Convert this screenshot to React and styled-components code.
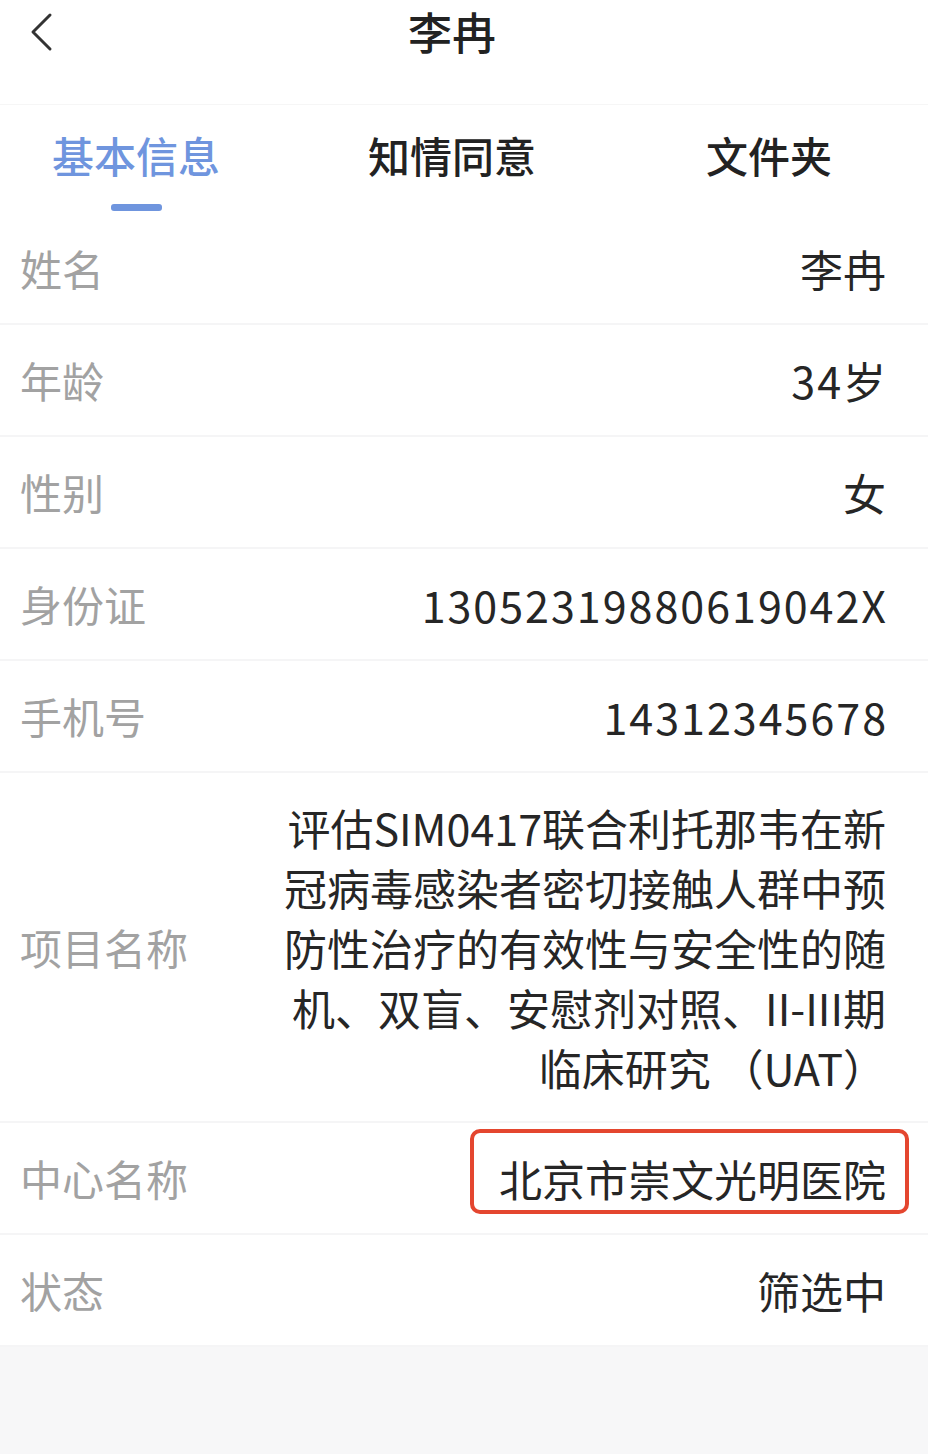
import React, { useState } from "react";
import styled, { createGlobalStyle } from "styled-components";

const GlobalStyle = createGlobalStyle`
  html, body {
    margin: 0;
    padding: 0;
    background: #f7f7f8;
    font-family: "Noto Sans CJK SC", "Noto Sans", sans-serif;
  }
  * { box-sizing: border-box; }
`;

const tabs = ["基本信息", "知情同意", "文件夹"];

const rows = [
  { label: "姓名", value: "李冉" },
  { label: "年龄", value: "34岁", numeric: true },
  { label: "性别", value: "女" },
  { label: "身份证", value: "13052319880619042X", numeric: true },
  { label: "手机号", value: "14312345678", numeric: true },
  {
    label: "项目名称",
    value:
      "评估SIM0417联合利托那韦在新\n冠病毒感染者密切接触人群中预\n防性治疗的有效性与安全性的随\n机、双盲、安慰剂对照、II-III期\n临床研究 （UAT）",
  },
  { label: "中心名称", value: "北京市崇文光明医院", marked: true },
  { label: "状态", value: "筛选中" },
];

export default function App() {
  const [active, setActive] = useState(0);

  return (
    <Page>
      <GlobalStyle />
      <Header>
        <BackButton aria-label="返回">
          <svg width="26" height="40" viewBox="0 0 26 40" fill="none">
            <polyline
              points="22,3 5,20 22,37"
              stroke="#333"
              strokeWidth="3"
              strokeLinecap="round"
              strokeLinejoin="round"
            />
          </svg>
        </BackButton>
        <Title>李冉</Title>
      </Header>

      <TabBar>
        {tabs.map((t, i) => (
          <Tab key={t} $active={i === active} onClick={() => setActive(i)}>
            {t}
            {i === active && <Indicator />}
          </Tab>
        ))}
      </TabBar>

      <List>
        {rows.map((r) => (
          <Row key={r.label}>
            <Label>{r.label}</Label>
            <Value $marked={r.marked} $numeric={r.numeric}>
              {r.value}
            </Value>
          </Row>
        ))}
      </List>
    </Page>
  );
}

const Page = styled.div`
  width: 928px;
  min-height: 1454px;
  background: #f7f7f8;
`;

const Header = styled.div`
  position: relative;
  height: 105px;
  display: flex;
  align-items: flex-start;
  justify-content: center;
  padding-right: 24px;
  background: #fff;
  border-bottom: 1px solid #f6f6f6;
`;

const BackButton = styled.button`
  position: absolute;
  left: 28px;
  top: 12px;
  padding: 0;
  border: none;
  background: none;
  cursor: pointer;
`;

const Title = styled.div`
  margin-top: 2px;
  font-size: 44px;
  line-height: 58px;
  font-weight: 500;
  color: #222;
`;

const TabBar = styled.div`
  display: grid;
  grid-template-columns: 272px 360px 274px;
  height: 108px;
  background: #fff;
`;

const Tab = styled.div`
  position: relative;
  display: flex;
  justify-content: center;
  padding-top: 22px;
  font-size: 42px;
  line-height: 56px;
  font-weight: 500;
  color: ${(p) => (p.$active ? "#6f95de" : "#222")};
  cursor: pointer;
`;

const Indicator = styled.span`
  position: absolute;
  left: 50%;
  bottom: 2px;
  width: 51px;
  height: 7px;
  margin-left: -25px;
  border-radius: 3px;
  background: #6f95de;
`;

const List = styled.div`
  background: #fff;
`;

const Row = styled.div`
  display: flex;
  align-items: center;
  justify-content: space-between;
  min-height: 112px;
  padding: 24px 42px 24px 20px;
  border-bottom: 2px solid #f5f5f6;
`;

const Label = styled.div`
  flex-shrink: 0;
  font-size: 42px;
  line-height: 60px;
  color: #a2a2a2;
`;

const Value = styled.div`
  position: relative;
  max-width: 640px;
  text-align: right;
  white-space: pre-line;
  font-size: 43px;
  line-height: 60px;
  color: #262626;
  letter-spacing: ${(p) => (p.$numeric ? "2px" : "0")};
  margin-right: ${(p) => (p.$numeric ? "-2px" : "0")};

  ${(p) =>
    p.$marked &&
    `
    &::after {
      content: "";
      position: absolute;
      left: -29px;
      right: -23px;
      top: -19px;
      bottom: -6px;
      border: 4px solid #e4462f;
      border-radius: 10px;
    }
  `}
`;
